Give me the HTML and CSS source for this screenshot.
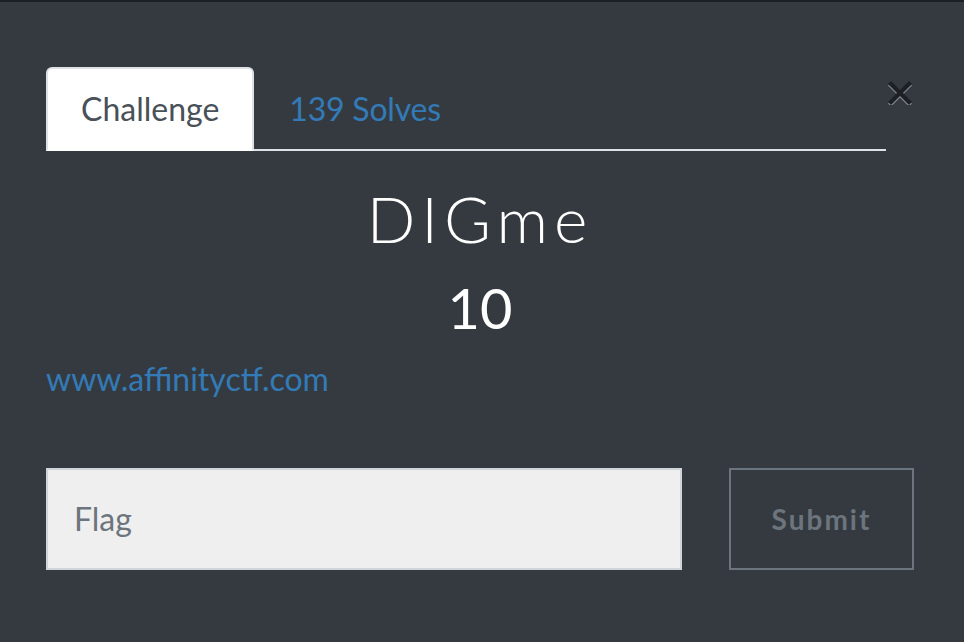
FILE: index.html
```html
<!DOCTYPE html>
<html lang="en">
<head>
<meta charset="utf-8">
<title>DIGme</title>
<link rel="stylesheet" href="styles.css">
</head>
<body>
<div class="modal-body">
  <div class="header-row">
    <ul class="nav-tabs">
      <li class="tab active">Challenge</li>
      <li class="tab link">139 Solves</li>
    </ul>
    <button class="close" aria-label="Close">
      <svg width="24" height="24" viewBox="0 0 24 24">
        <g stroke="#8b8f94" stroke-width="4.2" stroke-linecap="square" transform="translate(0 1.6)">
          <line x1="3" y1="3" x2="21" y2="21"/>
          <line x1="21" y1="3" x2="3" y2="21"/>
        </g>
        <g stroke="#1d2024" stroke-width="4.2" stroke-linecap="square">
          <line x1="3" y1="3" x2="21" y2="21"/>
          <line x1="21" y1="3" x2="3" y2="21"/>
        </g>
      </svg>
    </button>
  </div>
  <h2 class="name">DIGme</h2>
  <h3 class="value">10</h3>
  <p class="desc"><a href="#">www.affinityctf.com</a></p>
  <div class="submit-row">
    <input class="flag-input" type="text" placeholder="Flag">
    <button class="submit-btn">Submit</button>
  </div>
</div>
</body>
</html>
```
FILE: styles.css
```css
html, body {
  margin: 0;
  padding: 0;
}
body {
  background: #343a40;
  border-top: 2px solid #1c1f23;
  font-family: Lato, "Liberation Sans", sans-serif;
  font-size: 32px;
  line-height: 1.5;
  color: #ffffff;
  height: 640px;
  overflow: hidden;
}
.modal-body {
  padding: 65px 50px 0 46px;
}
.header-row {
  display: flex;
  align-items: flex-start;
}
.nav-tabs {
  flex: 1;
  display: flex;
  list-style: none;
  margin: 0;
  padding: 0;
  border-bottom: 2px solid #dee2e6;
}
.tab {
  padding: 16px 33px;
  border: 2px solid transparent;
  border-radius: 6px 6px 0 0;
  margin-bottom: -2px;
  line-height: 48px;
}
.tab.active {
  background: #ffffff;
  color: #495057;
  border-color: #dee2e6 #dee2e6 #ffffff;
}
.tab.link {
  color: #337ab7;
  letter-spacing: -0.2px;
}
.close {
  width: 28px;
  margin-top: 14px;
  padding: 0;
  border: 0;
  background: transparent;
  display: flex;
  justify-content: center;
}
.close svg {
  display: block;
}
.name {
  margin: 30px 0 16px;
  text-align: center;
  font-size: 64px;
  font-weight: 300;
  line-height: 1.2;
  letter-spacing: 6px;
}
.value {
  margin: 0 0 14px;
  text-align: center;
  font-size: 56px;
  font-weight: 400;
  line-height: 1.2;
}
.desc {
  margin: 0 0 65px;
  font-size: 32px;
  line-height: 48px;
}
.desc a {
  color: #337ab7;
  text-decoration: none;
}
.submit-row {
  display: grid;
  grid-template-columns: 1fr 185px;
  gap: 47px;
}
.flag-input {
  height: 102px;
  box-sizing: border-box;
  border: 2px solid #ced4da;
  background: #efefef;
  padding: 0 26px;
  font-family: Lato, "Liberation Sans", sans-serif;
  font-size: 32px;
  color: #495057;
  outline: none;
}
.flag-input::placeholder {
  color: #6c757d;
}
.submit-btn {
  height: 102px;
  box-sizing: border-box;
  border: 2px solid #6c757d;
  background: transparent;
  color: #6c757d;
  font-family: Lato, "Liberation Sans", sans-serif;
  font-size: 28px;
  font-weight: 700;
  letter-spacing: 2px;
  padding: 0;
}
```
